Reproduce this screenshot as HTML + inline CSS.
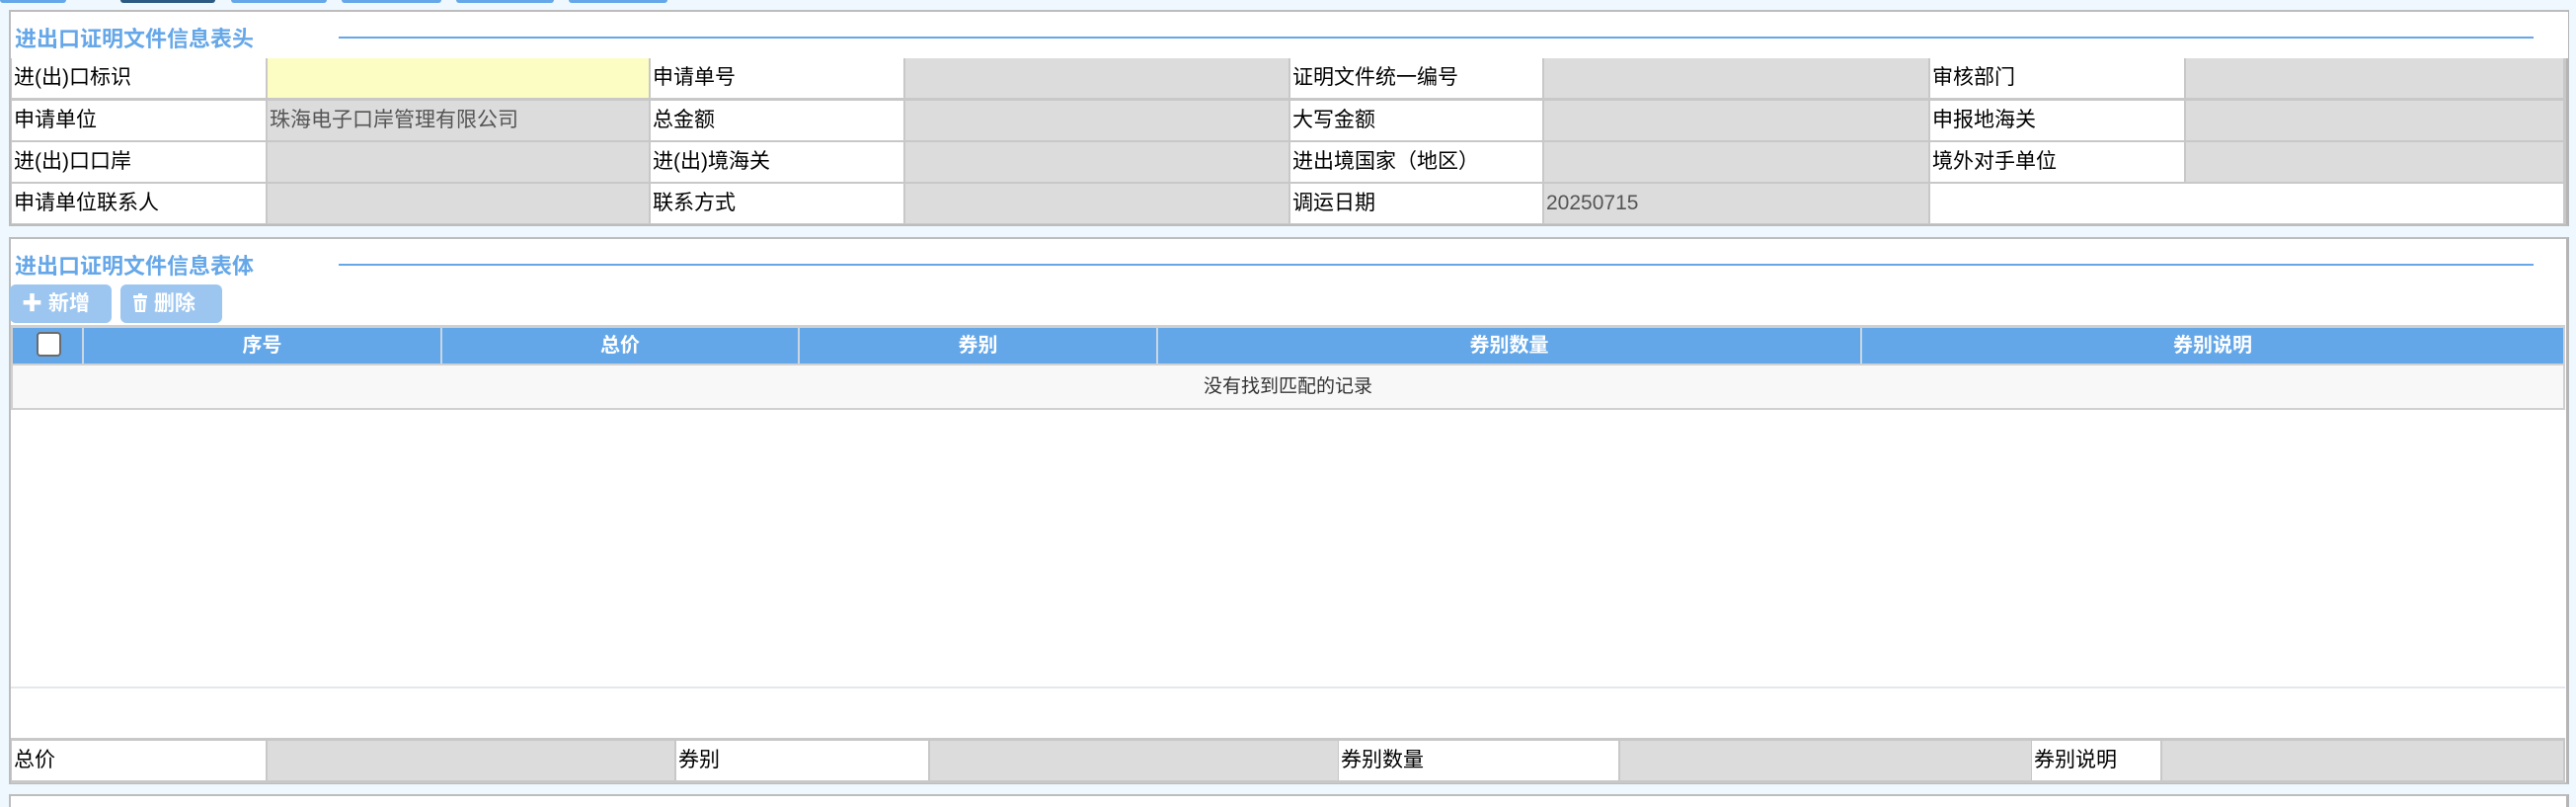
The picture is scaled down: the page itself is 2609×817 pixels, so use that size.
<!DOCTYPE html>
<html><head><meta charset="utf-8"><style>
*{margin:0;padding:0;box-sizing:border-box}
html{width:2609px;height:817px;overflow:hidden}
body{width:2609px;height:817px;background:#eef8fe;position:relative;overflow:hidden;font-family:"Liberation Sans","Noto Sans CJK SC",sans-serif;}
.a{position:absolute}
.panel{position:absolute;left:9px;width:2593px;background:#fff;border:2px solid #bdbdbd;border-right:3px solid #b5b5b5}
.title{position:absolute;left:4px;font-size:22px;font-weight:bold;color:#65a7e8;line-height:24px}
.line{position:absolute;left:332px;width:2223px;height:2px;background:#65a7e8}
.c{position:absolute;height:40px;font-size:21px;line-height:40px;padding-left:2px;white-space:nowrap;color:#000}
.l{background:#fff}
.v{background:#dcdcdc;color:#555}
.btn{position:absolute;top:288px;height:39px;background:#9cc6f0;border-radius:6px;color:#fff;font-weight:bold;font-size:21px;line-height:39px;padding-left:12px}
.th{position:absolute;top:332px;height:36px;background:#64a7e8;color:#fff;font-weight:bold;font-size:20px;line-height:36px;text-align:center;border-right:2px solid #c9d6e2}
</style></head><body>
<div class="a" style="left:0;top:0;width:67px;height:3px;background:#65a7e8;border-radius:0 0 4px 4px"></div>
<div class="a" style="left:122px;top:0;width:96px;height:3px;background:#2c5a82;border-radius:0 0 4px 4px"></div>
<div class="a" style="left:234px;top:0;width:97px;height:3px;background:#65a7e8;border-radius:0 0 4px 4px"></div>
<div class="a" style="left:346px;top:0;width:101px;height:3px;background:#65a7e8;border-radius:0 0 4px 4px"></div>
<div class="a" style="left:462px;top:0;width:99px;height:3px;background:#65a7e8;border-radius:0 0 4px 4px"></div>
<div class="a" style="left:576px;top:0;width:100px;height:3px;background:#65a7e8;border-radius:0 0 4px 4px"></div>

<div class="panel" style="top:10px;height:219px;background:#c8c8c8">
<div class="a" style="left:0;top:0;width:2590px;height:47px;background:#fff"></div>
<div class="title" style="top:16px">进出口证明文件信息表头</div>
<div class="line" style="top:25px"></div>
</div>
<div class="c l" style="left:12px;top:59px;width:257px">进(出)口标识</div>
<div class="c" style="left:271px;top:59px;width:386px;background:#fcfdc2"></div>
<div class="c l" style="left:659px;top:59px;width:256px">申请单号</div>
<div class="c v" style="left:917px;top:59px;width:388px"></div>
<div class="c l" style="left:1307px;top:59px;width:255px">证明文件统一编号</div>
<div class="c v" style="left:1564px;top:59px;width:389px"></div>
<div class="c l" style="left:1955px;top:59px;width:257px">审核部门</div>
<div class="c v" style="left:2214px;top:59px;width:382px"></div>

<div class="c l" style="left:12px;top:102px;width:257px">申请单位</div>
<div class="c v" style="left:271px;top:102px;width:386px">珠海电子口岸管理有限公司</div>
<div class="c l" style="left:659px;top:102px;width:256px">总金额</div>
<div class="c v" style="left:917px;top:102px;width:388px"></div>
<div class="c l" style="left:1307px;top:102px;width:255px">大写金额</div>
<div class="c v" style="left:1564px;top:102px;width:389px"></div>
<div class="c l" style="left:1955px;top:102px;width:257px">申报地海关</div>
<div class="c v" style="left:2214px;top:102px;width:382px"></div>

<div class="c l" style="left:12px;top:144px;width:257px">进(出)口口岸</div>
<div class="c v" style="left:271px;top:144px;width:386px"></div>
<div class="c l" style="left:659px;top:144px;width:256px">进(出)境海关</div>
<div class="c v" style="left:917px;top:144px;width:388px"></div>
<div class="c l" style="left:1307px;top:144px;width:255px">进出境国家（地区）</div>
<div class="c v" style="left:1564px;top:144px;width:389px"></div>
<div class="c l" style="left:1955px;top:144px;width:257px">境外对手单位</div>
<div class="c v" style="left:2214px;top:144px;width:382px"></div>

<div class="c l" style="left:12px;top:186px;width:257px">申请单位联系人</div>
<div class="c v" style="left:271px;top:186px;width:386px"></div>
<div class="c l" style="left:659px;top:186px;width:256px">联系方式</div>
<div class="c v" style="left:917px;top:186px;width:388px"></div>
<div class="c l" style="left:1307px;top:186px;width:255px">调运日期</div>
<div class="c v" style="left:1564px;top:186px;width:389px">20250715</div>
<div class="c l" style="left:1955px;top:186px;width:641px"></div>

<div class="panel" style="top:240px;height:554px">
<div class="title" style="top:16px">进出口证明文件信息表体</div>
<div class="line" style="top:25px"></div>
</div>
<div class="btn" style="left:10px;width:103px">✚ 新增</div>
<div class="btn" style="left:122px;width:103px"><svg width="16" height="20" viewBox="0 0 16 20" style="vertical-align:-3px"><rect x="1" y="2" width="14" height="3" fill="#fff"/><rect x="6" y="0" width="4" height="2" fill="#fff"/><path d="M2 6h12l-1 13H3z" fill="#fff"/><path d="M6 8v9M10 8v9" stroke="#9cc6f0" stroke-width="1.5"/></svg> 删除</div>
<div class="a" style="left:11px;top:329px;width:2587px;height:86px;background:#d0d0d0"></div>
<div class="th" style="left:13px;width:72px"><div class="a" style="left:24px;top:4px;width:25px;height:25px;background:#fff;border:2px solid #6b6b6b;border-radius:4px"></div></div>
<div class="th" style="left:85px;width:363px">序号</div>
<div class="th" style="left:448px;width:362px">总价</div>
<div class="th" style="left:810px;width:363px">券别</div>
<div class="th" style="left:1173px;width:713px">券别数量</div>
<div class="th" style="left:1886px;width:710px;border-right:none">券别说明</div>
<div class="a" style="left:13px;top:370px;width:2583px;height:43px;background:#f8f8f8;text-align:center;font-size:19px;line-height:43px;color:#333">没有找到匹配的记录</div>
<div class="a" style="left:11px;top:695px;width:2587px;height:2px;background:#e3e8ee"></div>
<div class="a" style="left:11px;top:747px;width:2587px;height:46px;background:#c8c8c8"></div>
<div class="c l" style="left:12px;top:750px;width:257px">总价</div>
<div class="c v" style="left:271px;top:750px;width:412px"></div>
<div class="c l" style="left:685px;top:750px;width:255px">券别</div>
<div class="c v" style="left:942px;top:750px;width:413px"></div>
<div class="c l" style="left:1356px;top:750px;width:283px">券别数量</div>
<div class="c v" style="left:1641px;top:750px;width:416px"></div>
<div class="c l" style="left:2058px;top:750px;width:130px">券别说明</div>
<div class="c v" style="left:2190px;top:750px;width:406px"></div>
<div class="panel" style="top:804px;height:13px;border-bottom:none"></div>
</body></html>
